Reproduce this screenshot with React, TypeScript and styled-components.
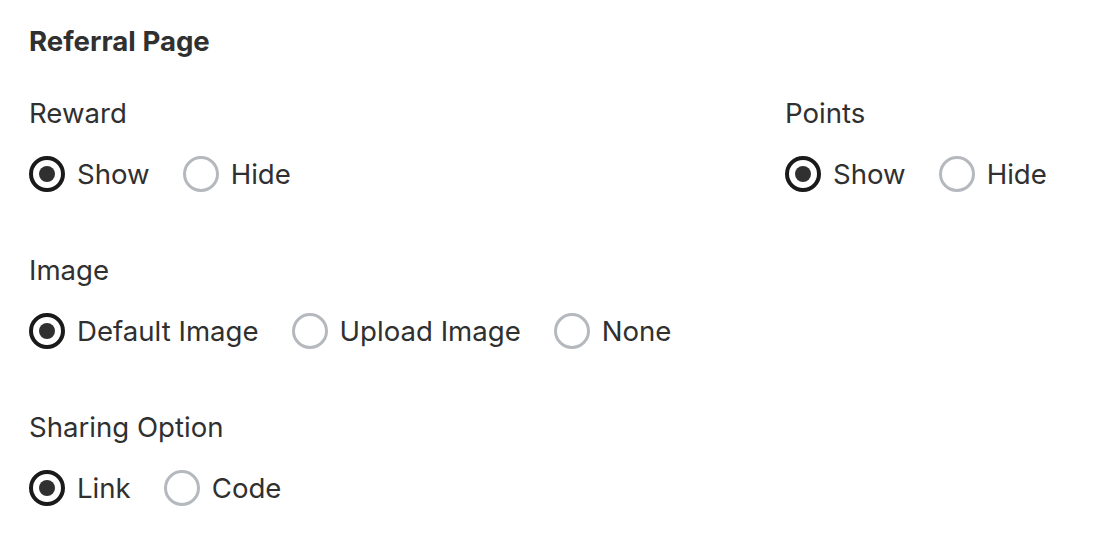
import React, { useState } from "react";
import styled, { createGlobalStyle } from "styled-components";

const GlobalStyle = createGlobalStyle`
  body {
    margin: 0;
    background: #ffffff;
    font-family: Inter, "Noto Sans", "Liberation Sans", sans-serif;
    color: #303030;
  }
`;

type Option = { value: string; label: string };

type GroupProps = {
    title: string;
    name: string;
    options: Option[];
    initial: string;
};

const RadioGroup: React.FC<GroupProps> = ({ title, name, options, initial }) => {
    const [value, setValue] = useState(initial);
    return (
        <Group>
            <Label>{title}</Label>
            <Choices>
                {options.map((o) => (
                    <Choice key={o.value} onClick={() => setValue(o.value)}>
                        <input type="radio" name={name} checked={value === o.value} readOnly hidden />
                        <Circle checked={value === o.value} />
                        <ChoiceText>{o.label}</ChoiceText>
                    </Choice>
                ))}
            </Choices>
        </Group>
    );
};

const showHide = [
    { value: "show", label: "Show" },
    { value: "hide", label: "Hide" },
];

export default function App() {
    return (
        <>
            <GlobalStyle />
            <Page>
                <Title>Referral Page</Title>
                <Row>
                    <RadioGroup title="Reward" name="reward" options={showHide} initial="show" />
                    <RadioGroup title="Points" name="points" options={showHide} initial="show" />
                </Row>
                <RadioGroup
                    title="Image"
                    name="image"
                    initial="default"
                    options={[
                        { value: "default", label: "Default Image" },
                        { value: "upload", label: "Upload Image" },
                        { value: "none", label: "None" },
                    ]}
                />
                <RadioGroup
                    title="Sharing Option"
                    name="sharing"
                    initial="link"
                    options={[
                        { value: "link", label: "Link" },
                        { value: "code", label: "Code" },
                    ]}
                />
            </Page>
        </>
    );
}

const Page = styled.div`
  display: flex;
  flex-direction: column;
  gap: 61px;
  padding: 24px 29px;
`;

const Title = styled.h2`
  margin: 0 0 -23px 0;
  font-size: 27.6px;
  line-height: 34px;
  font-weight: 700;
  color: #303030;
`;

const Row = styled.div`
  display: grid;
  grid-template-columns: 756px 1fr;
`;

const Group = styled.div`
  display: flex;
  flex-direction: column;
  gap: 26px;
`;

const Label = styled.div`
  font-size: 27.6px;
  line-height: 34px;
  color: #303030;
`;

const Choices = styled.div`
  display: flex;
  align-items: center;
  gap: 33px;
`;

const Choice = styled.label`
  display: flex;
  align-items: center;
  gap: 12px;
  cursor: pointer;
`;

const Circle = styled.span<{ checked: boolean }>`
  box-sizing: border-box;
  width: 36px;
  height: 36px;
  border-radius: 50%;
  border: ${({ checked }) => (checked ? "4px solid #1a1a1a" : "3.5px solid #b5b9be")};
  display: flex;
  align-items: center;
  justify-content: center;

  &::after {
    content: "";
    width: 16px;
    height: 16px;
    border-radius: 50%;
    background: #303030;
    display: ${({ checked }) => (checked ? "block" : "none")};
  }
`;

const ChoiceText = styled.span`
  font-size: 27.6px;
  line-height: 36px;
  color: #303030;
`;
